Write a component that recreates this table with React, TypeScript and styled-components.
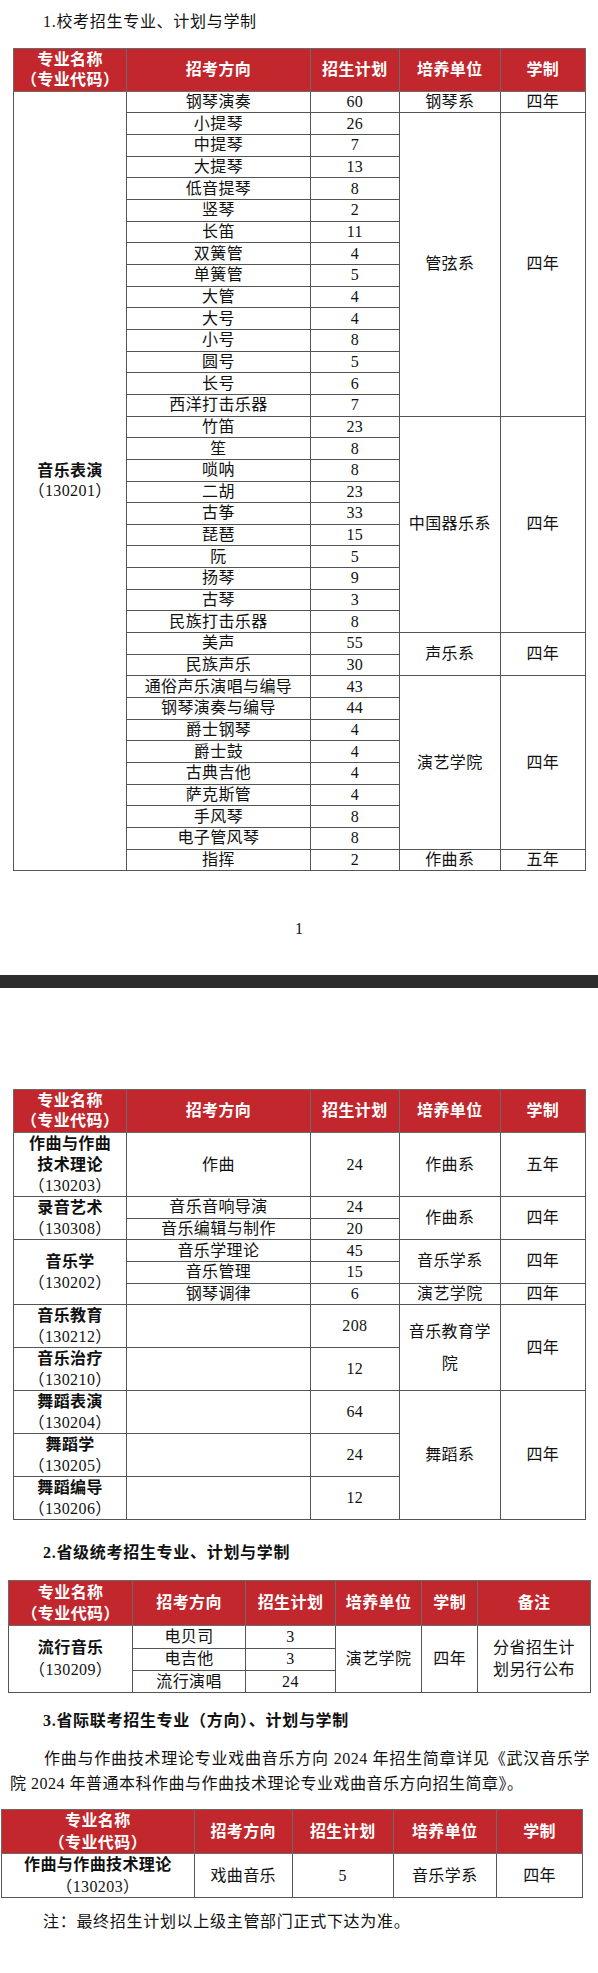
import React from "react";
import styled, { createGlobalStyle } from "styled-components";

type Item = [string, number];

type Group = {
  unit: string;
  years: string;
  items: Item[];
};

const GlobalStyle = createGlobalStyle`
  html, body {
    margin: 0;
    padding: 0;
    background: #ffffff;
  }
  body {
    font-family: "Liberation Serif", "Noto Sans CJK SC", serif;
    color: #111;
  }
`;

const Page = styled.div`
  width: 598px;
  display: flex;
  flex-direction: column;
  align-items: flex-start;
  & > * {
    flex-shrink: 0;
  }
`;

const Heading = styled.div<{ $top: number; $bold?: boolean }>`
  margin-top: ${({ $top }) => $top}px;
  padding-left: 43px;
  height: 24px;
  line-height: 24px;
  font-size: 16px;
  letter-spacing: 0.7px;
  font-weight: ${({ $bold }) => ($bold ? 700 : 400)};
  white-space: nowrap;
`;

const Table = styled.table<{ $top: number; $left: number; $width: number }>`
  margin-top: ${({ $top }) => $top}px;
  margin-left: ${({ $left }) => $left}px;
  width: ${({ $width }) => $width}px;
  border-collapse: collapse;
  table-layout: fixed;
  font-size: 16px;
  letter-spacing: 0.4px;
`;

const Row = styled.tr<{ $h: number }>`
  height: ${({ $h }) => $h}px;
`;

const Th = styled.th<{ $lh?: number }>`
  background: #c1272d;
  color: #ffffff;
  font-weight: 700;
  line-height: ${({ $lh }) => $lh ?? 20}px;
  padding: 0;
  text-align: center;
  vertical-align: middle;
  border: 1px solid #6a6a6a;
`;

const Td = styled.td<{ $lh?: number }>`
  padding: 0;
  text-align: center;
  vertical-align: middle;
  line-height: ${({ $lh }) => $lh ?? 20}px;
  border: 1px solid #555555;
  white-space: nowrap;
`;

const Name = styled.div`
  font-weight: 700;
`;

const PageNumber = styled.div`
  align-self: stretch;
  margin-top: 48px;
  height: 20px;
  line-height: 20px;
  text-align: center;
  font-size: 16px;
`;

const PageGap = styled.div`
  align-self: stretch;
  margin-top: 36px;
  height: 13px;
  background: #2d2d2d;
`;

const Paragraph = styled.p`
  margin: 13px 0 0 0;
  padding: 0 8px 0 10px;
  width: 598px;
  box-sizing: border-box;
  font-size: 16px;
  line-height: 25px;
  letter-spacing: 0.5px;
  text-indent: 34px;
  text-align: justify;
`;

const Note = styled.div`
  margin-top: 12px;
  padding-left: 43px;
  height: 24px;
  line-height: 24px;
  font-size: 16px;
  letter-spacing: 0.7px;
`;

const groups: Group[] = [
  { unit: "钢琴系", years: "四年", items: [["钢琴演奏", 60]] },
  {
    unit: "管弦系",
    years: "四年",
    items: [
      ["小提琴", 26],
      ["中提琴", 7],
      ["大提琴", 13],
      ["低音提琴", 8],
      ["竖琴", 2],
      ["长笛", 11],
      ["双簧管", 4],
      ["单簧管", 5],
      ["大管", 4],
      ["大号", 4],
      ["小号", 8],
      ["圆号", 5],
      ["长号", 6],
      ["西洋打击乐器", 7],
    ],
  },
  {
    unit: "中国器乐系",
    years: "四年",
    items: [
      ["竹笛", 23],
      ["笙", 8],
      ["唢呐", 8],
      ["二胡", 23],
      ["古筝", 33],
      ["琵琶", 15],
      ["阮", 5],
      ["扬琴", 9],
      ["古琴", 3],
      ["民族打击乐器", 8],
    ],
  },
  {
    unit: "声乐系",
    years: "四年",
    items: [
      ["美声", 55],
      ["民族声乐", 30],
    ],
  },
  {
    unit: "演艺学院",
    years: "四年",
    items: [
      ["通俗声乐演唱与编导", 43],
      ["钢琴演奏与编导", 44],
      ["爵士钢琴", 4],
      ["爵士鼓", 4],
      ["古典吉他", 4],
      ["萨克斯管", 4],
      ["手风琴", 8],
      ["电子管风琴", 8],
    ],
  },
  { unit: "作曲系", years: "五年", items: [["指挥", 2]] },
];

const totalRows = groups.reduce((n, g) => n + g.items.length, 0);

const wideCols = [113.2, 183.5, 89.3, 100.7, 85.4];

const Cols: React.FC<{ widths: number[] }> = ({ widths }) => (
  <colgroup>
    {widths.map((w, i) => (
      <col key={i} style={{ width: w }} />
    ))}
  </colgroup>
);

const MainHeader: React.FC<{ h: number; note?: boolean; lh?: number }> = ({ h, note, lh }) => (
  <Row $h={h}>
    <Th $lh={lh}>
      专业名称
      <br />
      （专业代码）
    </Th>
    <Th>招考方向</Th>
    <Th>招生计划</Th>
    <Th>培养单位</Th>
    <Th>学制</Th>
    {note && <Th>备注</Th>}
  </Row>
);

const U = 21.67;
const U2 = 42.67;

const App: React.FC = () => {
  return (
    <Page>
      <GlobalStyle />
      <Heading $top={10}>1.校考招生专业、计划与学制</Heading>

      <Table $top={14} $left={13} $width={572}>
        <Cols widths={wideCols} />
        <tbody>
          <MainHeader h={42.7} />
          {groups.map((g, gi) =>
            g.items.map(([dir, num], i) => (
              <Row $h={U} key={`${gi}-${i}`}>
                {gi === 0 && i === 0 && (
                  <Td rowSpan={totalRows}>
                    <Name>音乐表演</Name>
                    （130201）
                  </Td>
                )}
                <Td>{dir}</Td>
                <Td>{num}</Td>
                {i === 0 && <Td rowSpan={g.items.length}>{g.unit}</Td>}
                {i === 0 && <Td rowSpan={g.items.length}>{g.years}</Td>}
              </Row>
            ))
          )}
        </tbody>
      </Table>

      <PageNumber>1</PageNumber>
      <PageGap />

      <Table $top={101} $left={13} $width={572}>
        <Cols widths={wideCols} />
        <tbody>
          <MainHeader h={42.7} />
          <Row $h={64}>
            <Td $lh={21}>
              <Name>
                作曲与作曲
                <br />
                技术理论
              </Name>
              （130203）
            </Td>
            <Td>作曲</Td>
            <Td>24</Td>
            <Td>作曲系</Td>
            <Td>五年</Td>
          </Row>
          <Row $h={U}>
            <Td rowSpan={2} $lh={21}>
              <Name>录音艺术</Name>
              （130308）
            </Td>
            <Td>音乐音响导演</Td>
            <Td>24</Td>
            <Td rowSpan={2}>作曲系</Td>
            <Td rowSpan={2}>四年</Td>
          </Row>
          <Row $h={U}>
            <Td>音乐编辑与制作</Td>
            <Td>20</Td>
          </Row>
          <Row $h={U}>
            <Td rowSpan={3} $lh={21}>
              <Name>音乐学</Name>
              （130202）
            </Td>
            <Td>音乐学理论</Td>
            <Td>45</Td>
            <Td rowSpan={2}>音乐学系</Td>
            <Td rowSpan={2}>四年</Td>
          </Row>
          <Row $h={U}>
            <Td>音乐管理</Td>
            <Td>15</Td>
          </Row>
          <Row $h={U}>
            <Td>钢琴调律</Td>
            <Td>6</Td>
            <Td>演艺学院</Td>
            <Td>四年</Td>
          </Row>
          <Row $h={U2}>
            <Td $lh={21}>
              <Name>音乐教育</Name>
              （130212）
            </Td>
            <Td />
            <Td>208</Td>
            <Td rowSpan={2} $lh={32}>
              音乐教育学
              <br />
              院
            </Td>
            <Td rowSpan={2}>四年</Td>
          </Row>
          <Row $h={U2}>
            <Td $lh={21}>
              <Name>音乐治疗</Name>
              （130210）
            </Td>
            <Td />
            <Td>12</Td>
          </Row>
          <Row $h={U2}>
            <Td $lh={21}>
              <Name>舞蹈表演</Name>
              （130204）
            </Td>
            <Td />
            <Td>64</Td>
            <Td rowSpan={3}>舞蹈系</Td>
            <Td rowSpan={3}>四年</Td>
          </Row>
          <Row $h={U2}>
            <Td $lh={21}>
              <Name>舞蹈学</Name>
              （130205）
            </Td>
            <Td />
            <Td>24</Td>
          </Row>
          <Row $h={U2}>
            <Td $lh={21}>
              <Name>舞蹈编导</Name>
              （130206）
            </Td>
            <Td />
            <Td>12</Td>
          </Row>
        </tbody>
      </Table>

      <Heading $top={21} $bold>
        2.省级统考招生专业、计划与学制
      </Heading>

      <Table $top={15} $left={8} $width={582}>
        <Cols widths={[124.3, 112.5, 90.4, 85.8, 56.5, 112.1]} />
        <tbody>
          <MainHeader h={45} note lh={21} />
          <Row $h={22.3}>
            <Td rowSpan={3} $lh={22}>
              <Name>流行音乐</Name>
              （130209）
            </Td>
            <Td>电贝司</Td>
            <Td>3</Td>
            <Td rowSpan={3}>演艺学院</Td>
            <Td rowSpan={3}>四年</Td>
            <Td rowSpan={3} $lh={22}>
              分省招生计
              <br />
              划另行公布
            </Td>
          </Row>
          <Row $h={22.3}>
            <Td>电吉他</Td>
            <Td>3</Td>
          </Row>
          <Row $h={22.3}>
            <Td>流行演唱</Td>
            <Td>24</Td>
          </Row>
        </tbody>
      </Table>

      <Heading $top={16} $bold>
        3.省际联考招生专业（方向）、计划与学制
      </Heading>

      <Paragraph>
        作曲与作曲技术理论专业戏曲音乐方向 2024 年招生简章详见《武汉音乐学院 2024 年普通本科作曲与作曲技术理论专业戏曲音乐方向招生简章》。
      </Paragraph>

      <Table $top={13} $left={1} $width={582}>
        <Cols widths={[192.7, 98.1, 101, 103, 86.6]} />
        <tbody>
          <MainHeader h={44.3} lh={21.5} />
          <Row $h={44}>
            <Td $lh={21.5}>
              <Name>作曲与作曲技术理论</Name>
              （130203）
            </Td>
            <Td>戏曲音乐</Td>
            <Td>5</Td>
            <Td>音乐学系</Td>
            <Td>四年</Td>
          </Row>
        </tbody>
      </Table>

      <Note>注：最终招生计划以上级主管部门正式下达为准。</Note>
    </Page>
  );
};

export default App;
